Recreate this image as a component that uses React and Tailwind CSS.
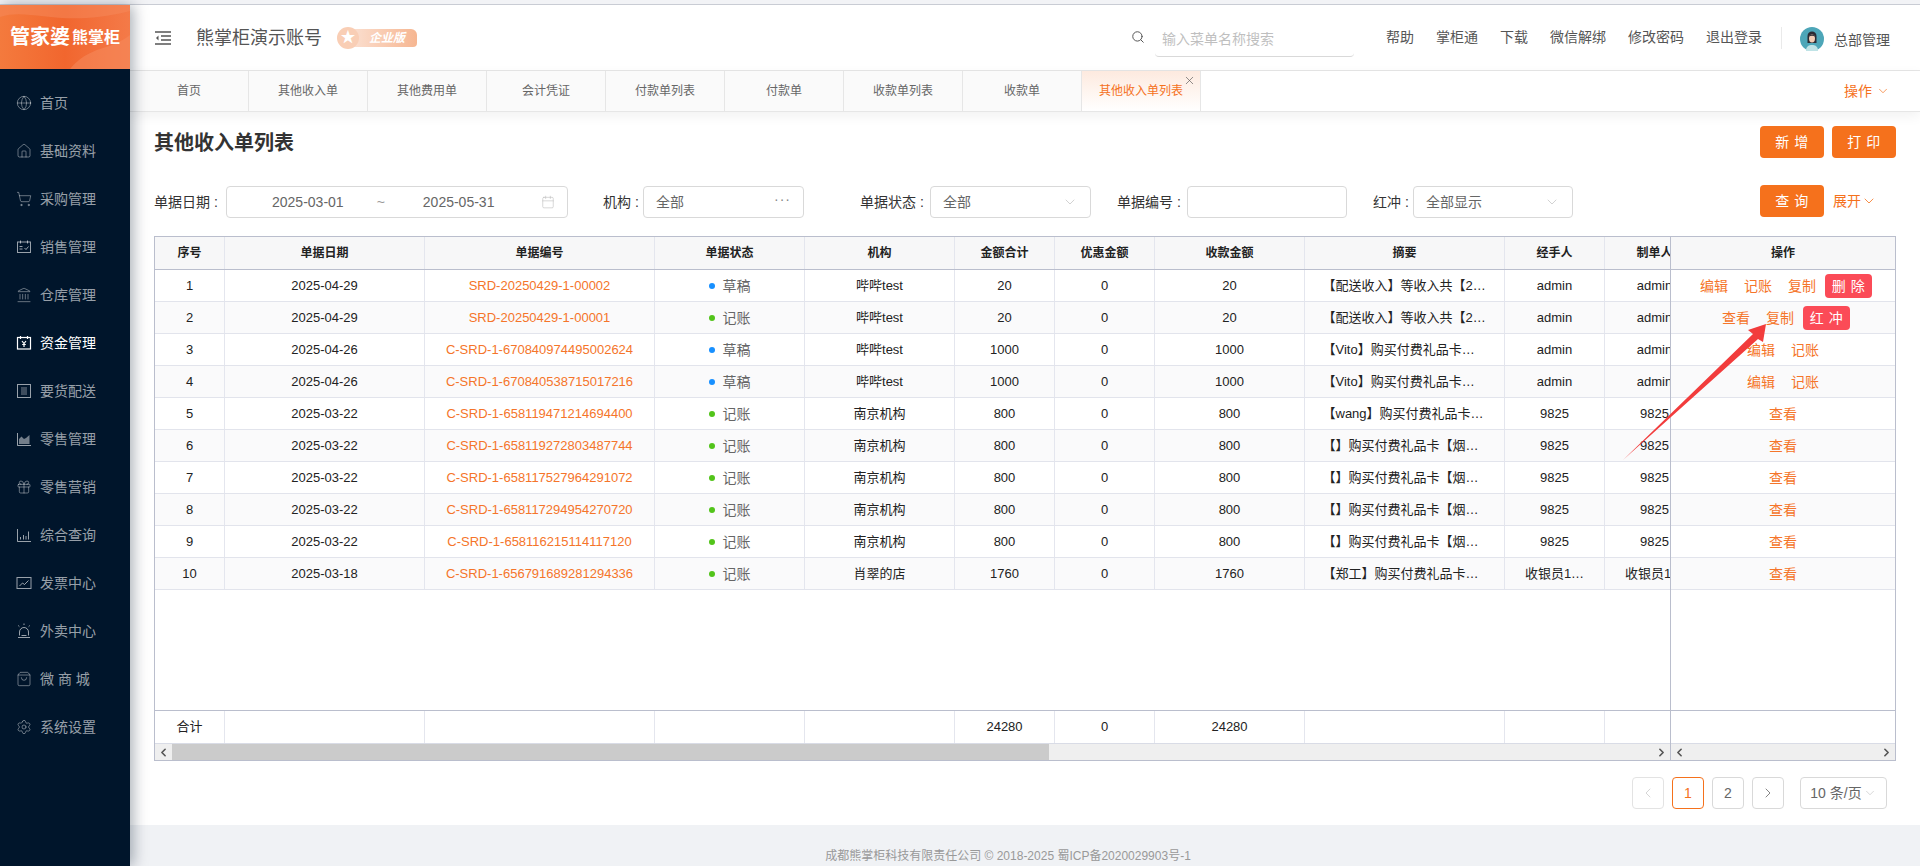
import React from "react";
import {
  Globe,
  House,
  ShoppingCart,
  Landmark,
  Gift,
  ShoppingBag,
  Settings,
  Search,
  Calendar,
  ChevronDown,
  ChevronLeft,
  ChevronRight,
  X,
} from "lucide-react";

const FONT = '"Liberation Sans", "Noto Sans CJK SC", sans-serif';

const SalesIcon = () => (
  <svg width="16" height="16" viewBox="0 0 16 16" fill="none" stroke="currentColor" strokeWidth="1">
    <rect x="1.5" y="3" width="13" height="10.5" />
    <path d="M4.5 1.5v3M11.5 1.5v3M3.5 7.5h3M3.5 10h3M8.5 9l1.5 1.5 2.5-3" />
  </svg>
);
const FundIcon = () => (
  <svg width="16" height="16" viewBox="0 0 16 16" fill="none" stroke="currentColor" strokeWidth="1.2">
    <rect x="1.5" y="2.5" width="13" height="11.5" />
    <path d="M4.5 1v3M11.5 1v3M6 6l2 2.5L10 6M8 8.5V12M6.2 9.5h3.6" />
  </svg>
);
const DeliveryIcon = () => (
  <svg width="16" height="16" viewBox="0 0 16 16" fill="none" stroke="currentColor" strokeWidth="1">
    <rect x="1.5" y="1.5" width="13" height="13" />
    <path d="M5 5h6M5 7h6M5 9h6M5 11h6" opacity="0.8" />
  </svg>
);
const AreaIcon = () => (
  <svg width="16" height="16" viewBox="0 0 16 16" fill="none">
    <path d="M1.5 2v12.5H15" stroke="currentColor" />
    <path d="M3 13V8l2.5-2.5L8 8l2-1 3.5-3V13z" fill="currentColor" opacity="0.75" />
  </svg>
);
const BarsIcon = () => (
  <svg width="16" height="16" viewBox="0 0 16 16" fill="none" stroke="currentColor">
    <path d="M1.5 2v12.5H15M4.5 12.5V10M7.5 12.5V8M10 12.5V9M12.5 12.5V4.5" />
  </svg>
);
const InvoiceIcon = () => (
  <svg width="16" height="16" viewBox="0 0 16 16" fill="none" stroke="currentColor" strokeWidth="1">
    <rect x="1" y="2.5" width="14" height="11" />
    <path d="M3.5 11l3-3 2 1.5 4-4" />
  </svg>
);
const AlarmIcon = () => (
  <svg width="16" height="16" viewBox="0 0 16 16" fill="none" stroke="currentColor" strokeWidth="1">
    <path d="M3.5 12.5V9a4.5 4.5 0 0 1 9 0v3.5M2 14.5h12M8 .5v1.5M2.2 2.5l1.2 1.2M13.8 2.5l-1.2 1.2M5.5 12.5h5" />
  </svg>
);

const MENU = [
  { label: "首页", icon: <Globe size={16} strokeWidth={1} /> },
  { label: "基础资料", icon: <House size={16} strokeWidth={1} /> },
  { label: "采购管理", icon: <ShoppingCart size={16} strokeWidth={1} /> },
  { label: "销售管理", icon: <SalesIcon /> },
  { label: "仓库管理", icon: <Landmark size={16} strokeWidth={1} /> },
  { label: "资金管理", icon: <FundIcon />, active: true },
  { label: "要货配送", icon: <DeliveryIcon /> },
  { label: "零售管理", icon: <AreaIcon /> },
  { label: "零售营销", icon: <Gift size={16} strokeWidth={1} /> },
  { label: "综合查询", icon: <BarsIcon /> },
  { label: "发票中心", icon: <InvoiceIcon /> },
  { label: "外卖中心", icon: <AlarmIcon /> },
  { label: "微 商 城", icon: <ShoppingBag size={16} strokeWidth={1} /> },
  { label: "系统设置", icon: <Settings size={16} strokeWidth={1} /> },
];

const TABS = ["首页", "其他收入单", "其他费用单", "会计凭证", "付款单列表", "付款单", "收款单列表", "收款单", "其他收入单列表"];
const LINKS = ["帮助", "掌柜通", "下载", "微信解绑", "修改密码", "退出登录"];
const COLUMNS = ["序号", "单据日期", "单据编号", "单据状态", "机构", "金额合计", "优惠金额", "收款金额", "摘要", "经手人", "制单人"];
const GRID = "grid grid-cols-[70px_200px_230px_150px_150px_100px_100px_150px_200px_100px_100px] w-[1650px]";

const GIFT = "购买付费礼品卡【烟草】";
const row = (date, code, status, org, amount, memo, handler, maker, actions) => ({ date, code, status, org, amount, memo, handler, maker, actions });
const ROWS = [
  row("2025-04-29", "SRD-20250429-1-00002", "草稿", "哔哔test", 20, "【配送收入】等收入共【2】笔", "admin", "admin", ["编辑", "记账", "复制", "删除"]),
  row("2025-04-29", "SRD-20250429-1-00001", "记账", "哔哔test", 20, "【配送收入】等收入共【2】笔", "admin", "admin", ["查看", "复制", "红冲"]),
  row("2025-04-26", "C-SRD-1-670840974495002624", "草稿", "哔哔test", 1000, "【Vito】购买付费礼品卡【烟草】", "admin", "admin", ["编辑", "记账"]),
  row("2025-04-26", "C-SRD-1-670840538715017216", "草稿", "哔哔test", 1000, "【Vito】购买付费礼品卡【烟草】", "admin", "admin", ["编辑", "记账"]),
  row("2025-03-22", "C-SRD-1-658119471214694400", "记账", "南京机构", 800, "【wang】购买付费礼品卡【烟草】", "9825", "9825", ["查看"]),
  row("2025-03-22", "C-SRD-1-658119272803487744", "记账", "南京机构", 800, "【】" + GIFT, "9825", "9825", ["查看"]),
  row("2025-03-22", "C-SRD-1-658117527964291072", "记账", "南京机构", 800, "【】" + GIFT, "9825", "9825", ["查看"]),
  row("2025-03-22", "C-SRD-1-658117294954270720", "记账", "南京机构", 800, "【】" + GIFT, "9825", "9825", ["查看"]),
  row("2025-03-22", "C-SRD-1-658116215114117120", "记账", "南京机构", 800, "【】" + GIFT, "9825", "9825", ["查看"]),
  row("2025-03-18", "C-SRD-1-656791689281294336", "记账", "肖翠的店", 1760, "【郑工】购买付费礼品卡【烟草】", "收银员1…", "收银员1…", ["查看"]),
];

const Cell = ({ children, className = "" }) => (
  <div className={`flex items-center justify-center border-r border-[#e4e6ee] min-w-0 ${className}`}>{children}</div>
);

const Sidebar = () => (
  <aside className="w-[130px] shrink-0 bg-[#00152b] z-10 shadow-[3px_0_14px_rgba(0,21,41,0.35)] flex flex-col">
    <div className="relative h-[64px] shrink-0 overflow-hidden bg-gradient-to-r from-[#f47a3d] via-[#f1662e] to-[#f47a48] flex items-center pl-[10px] text-white font-bold">
      <svg className="absolute inset-0" width="130" height="64" viewBox="0 0 130 64" fill="none">
        <path d="M0 12C30 2 60 24 130 6V0H0z" fill="#f68a5c" opacity="0.5" />
        <path d="M70 64C90 40 110 46 130 30v34z" fill="#f68a5c" opacity="0.55" />
      </svg>
      <span className="relative text-[20px] leading-none">管家婆</span>
      <span className="relative text-[16px] leading-none ml-[2px] mt-[2px]">熊掌柜</span>
    </div>
    <nav className="pt-[10px]">
      {MENU.map((item) => (
        <div key={item.label} className={`h-12 flex items-center gap-[8px] pl-[16px] text-sm ${item.active ? "text-white" : "text-white/60"}`}>
          {item.icon}
          <span>{item.label}</span>
        </div>
      ))}
    </nav>
  </aside>
);

const Header = () => (
  <header className="h-[66px] shrink-0 bg-white border-b border-[#e6e6e6] flex items-center pl-[25px] pr-[30px]">
    <svg width="16" height="14" viewBox="0 0 16 14" fill="none" stroke="#555" strokeWidth="1.3">
      <path d="M0 1h16M6 5h10M6 9h10M0 13h16" />
      <path d="M3.5 4.5L1 7l2.5 2.5z" fill="#555" stroke="none" />
    </svg>
    <span className="ml-[25px] text-lg text-[#555]">熊掌柜演示账号</span>
    <div className="relative ml-[15px] w-[80px] h-[22px] flex items-center">
      <div className="absolute right-0 left-[8px] h-[18px] rounded-[4px] rounded-tr-[6px] bg-gradient-to-r from-[#fbe3d6] to-[#f6b691] flex items-center pl-[24px] text-white text-xs font-bold italic">
        企业版
      </div>
      <div className="relative w-[22px] h-[22px] rounded-full bg-[#f9ceb5] flex items-center justify-center text-white text-[15px]">★</div>
    </div>
    <div className="ml-auto flex items-center">
      <Search size={14} strokeWidth={1.7} className="text-[#555] -mt-[2px]" />
      <div className="ml-[10px] w-[199px] h-[34px] border-b border-[#d9d9d9] rounded-b-[4px] flex items-center pl-[7px] text-sm text-[#bfbfbf] mt-[4px]">
        输入菜单名称搜索
      </div>
      <div className="ml-[32px] flex items-center gap-[22px] text-sm text-[#555] -mt-[2px]">
        {LINKS.map((l) => (
          <span key={l}>{l}</span>
        ))}
      </div>
      <div className="ml-[19px] w-px h-[22px] bg-[#eaeaea]" />
      <svg className="ml-[18px] mt-[2px]" width="24" height="24" viewBox="0 0 24 24">
        <circle cx="12" cy="12" r="12" fill="#4da6b8" />
        <path d="M6 24c0-5 3-6 6-6s6 1 6 6z" fill="#bfe3e6" />
        <path d="M7.5 16V9c0-3 2-4.5 4.5-4.5S16.500 6 16.500 9v7z" fill="#2b2b33" />
        <ellipse cx="12" cy="11.500" rx="3" ry="4" fill="#f4cdb5" />
        <path d="M8.800 9.500c1-2.500 5.400-2.500 6.400 0-2-1-4.400-1-6.400 0z" fill="#2b2b33" />
      </svg>
      <span className="ml-[10px] text-sm text-[#555] mt-[4px]">总部管理</span>
    </div>
  </header>
);

const Tabs = () => (
  <div className="relative h-[41px] shrink-0 bg-white border-b border-[#e6e6e6] shadow-[0_4px_12px_rgba(0,0,0,0.06)] flex">
    {TABS.map((t, i) => {
      const active = i === TABS.length - 1;
      return (
        <div
          key={t + i}
          className={`relative w-[119px] flex items-center justify-center text-xs border-r border-[#e6e6e6] ${
            active ? "bg-gradient-to-b from-[#fdeadf] to-white text-[#f5711c]" : "bg-[#fafafa] text-[#666]"
          }`}
        >
          {t}
          {active && <X size={13} strokeWidth={1.2} className="absolute top-[3px] right-[4px] text-[#555]" />}
        </div>
      );
    })}
    <div className="ml-auto mr-[30px] flex items-center gap-[4px] text-sm text-[#f5711c]">
      操作
      <ChevronDown size={14} strokeWidth={1.2} />
    </div>
  </div>
);

const Box = ({ className = "", children }) => (
  <div className={`h-8 border border-[#d9d9d9] rounded-[4px] flex items-center text-sm text-[#666] px-[12px] ${className}`}>{children}</div>
);

const OrangeButton = ({ children }) => (
  <button className="w-16 h-8 rounded-[4px] bg-[#f5711c] text-white text-sm tracking-[0.5px]">{children}</button>
);

const Filters = () => (
  <div className="mt-[28px] flex items-center text-sm text-[#333]">
    <span className="w-[72px] whitespace-nowrap">单据日期 :</span>
    <Box className="w-[342px] relative">
      <span className="ml-[33px]">2025-03-01</span>
      <span className="ml-[33px] text-[#999]">~</span>
      <span className="ml-[38px]">2025-05-31</span>
      <Calendar size={14} strokeWidth={1} className="ml-auto text-[#bbb]" />
    </Box>
    <span className="ml-[35px] w-[40px] whitespace-nowrap">机构 :</span>
    <Box className="w-[161px] justify-between">
      全部
      <span className="text-[#888] leading-none tracking-[1px] -mt-[6px]">···</span>
    </Box>
    <span className="ml-[56px] w-[70px] whitespace-nowrap">单据状态 :</span>
    <Box className="w-[161px] justify-between">
      全部
      <ChevronDown size={16} strokeWidth={1} className="text-[#bbb]" />
    </Box>
    <span className="ml-[26px] w-[70px] whitespace-nowrap">单据编号 :</span>
    <Box className="w-[160px]" />
    <span className="ml-[26px] w-[40px] whitespace-nowrap">红冲 :</span>
    <Box className="w-[160px] justify-between">
      全部显示
      <ChevronDown size={16} strokeWidth={1} className="text-[#bbb]" />
    </Box>
    <div className="ml-auto w-[136px] flex items-center -mt-[2px]">
      <OrangeButton>查 询</OrangeButton>
      <span className="ml-[9px] text-[#f5711c] flex items-center">
        展开
        <ChevronDown size={16} strokeWidth={1.2} />
      </span>
    </div>
  </div>
);

const ScrollArrow = ({ dir }) =>
  dir === "left" ? (
    <ChevronLeft size={13} strokeWidth={3} className="text-[#555]" />
  ) : (
    <ChevronRight size={13} strokeWidth={3} className="text-[#555]" />
  );

const Action = ({ label }) =>
  label === "删除" || label === "红冲" ? (
    <span className="ml-[-7px] mr-[-6px] w-[47px] h-[24px] rounded-[4px] bg-[#fb4b57] text-white flex items-center justify-center tracking-[0.5px]">
      {label[0]} {label[1]}
    </span>
  ) : (
    <span className="text-[#f5752a]">{label}</span>
  );

const DataTable = () => (
  <div className="mt-[18px] h-[525px] border border-[#babecd] flex text-[13px] text-[#222]">
    <div className="w-[1515px] shrink-0 flex flex-col overflow-hidden">
      <div className="flex-1 min-h-0 overflow-hidden">
        <div className={`${GRID} h-[33px] bg-[#f7f7f8] border-b border-[#babecd] text-xs font-bold text-[#222]`}>
          {COLUMNS.map((c) => (
            <Cell key={c}>{c}</Cell>
          ))}
        </div>
        {ROWS.map((r, i) => (
          <div key={r.code} className={`${GRID} h-[32px] border-b border-[#e2e4ec] ${i % 2 ? "bg-[#fafafb]" : "bg-white"}`}>
            <Cell>{i + 1}</Cell>
            <Cell>{r.date}</Cell>
            <Cell className="text-[#f5752a]">{r.code}</Cell>
            <Cell className="text-sm text-[#666] gap-[8px]">
              <span className={`w-[6px] h-[6px] rounded-full ${r.status === "草稿" ? "bg-[#1890ff]" : "bg-[#52c41a]"}`} />
              {r.status}
            </Cell>
            <Cell>{r.org}</Cell>
            <Cell>{r.amount}</Cell>
            <Cell>0</Cell>
            <Cell>{r.amount}</Cell>
            <Cell className="px-[17.5px]">
              <span className="block w-full truncate text-center">{r.memo}</span>
            </Cell>
            <Cell>{r.handler}</Cell>
            <Cell className="whitespace-nowrap">{r.maker}</Cell>
          </div>
        ))}
      </div>
      <div className={`${GRID} h-[33px] shrink-0 border-t border-[#babecd] border-b-0`}>
        {COLUMNS.map((c, i) => (
          <Cell key={c}>{i === 0 ? "合计" : i === 5 || i === 7 ? "24280" : i === 6 ? "0" : ""}</Cell>
        ))}
      </div>
      <div className="h-[17px] shrink-0 border-t border-[#d9dce6] bg-[#efefef] flex items-center">
        <div className="w-[17px] h-full flex items-center justify-center">
          <ScrollArrow dir="left" />
        </div>
        <div className="w-[877px] h-full bg-[#cbcbcb]" />
        <div className="ml-auto w-[17px] h-full flex items-center justify-center">
          <ScrollArrow dir="right" />
        </div>
      </div>
    </div>
    <div className="flex-1 min-w-0 flex flex-col border-l border-[#babecd]">
      <div className="h-[33px] shrink-0 flex items-center justify-center bg-[#f7f7f8] border-b border-[#babecd] text-xs font-bold">操作</div>
      {ROWS.map((r, i) => (
        <div key={r.code} className={`h-[32px] shrink-0 flex items-center justify-center gap-[16px] text-sm border-b border-[#e2e4ec] ${i % 2 ? "bg-[#fafafb]" : "bg-white"}`}>
          {r.actions.map((a) => (
            <Action key={a} label={a} />
          ))}
        </div>
      ))}
      <div className="flex-1" />
      <div className="h-[33px] shrink-0 border-t border-[#babecd]" />
      <div className="h-[17px] shrink-0 border-t border-[#d9dce6] bg-[#efefef] flex items-center justify-between px-[2px]">
        <ScrollArrow dir="left" />
        <ScrollArrow dir="right" />
      </div>
    </div>
  </div>
);

const PageBox = ({ children, className = "" }) => (
  <div className={`h-8 w-8 rounded-[4px] border flex items-center justify-center text-sm ${className}`}>{children}</div>
);

const Pagination = () => (
  <div className="mt-[16px] flex items-center justify-end gap-[8px] pr-[9px] text-[#666]">
    <PageBox className="border-[#e3e3e3] text-[#ccc]">
      <ChevronLeft size={16} strokeWidth={1.2} />
    </PageBox>
    <PageBox className="border-[#f5711c] text-[#f5711c]">1</PageBox>
    <PageBox className="border-[#d9d9d9]">2</PageBox>
    <PageBox className="border-[#d9d9d9]">
      <ChevronRight size={16} strokeWidth={1.2} />
    </PageBox>
    <div className="ml-[8px] w-[87px] h-8 rounded-[4px] border border-[#d9d9d9] flex items-center justify-center gap-[1px] text-sm">
      10 条/页
      <ChevronDown size={14} strokeWidth={1} className="text-[#bbb]" />
    </div>
  </div>
);

export default function App() {
  return (
    <div className="relative h-screen overflow-hidden flex flex-col bg-white" style={{ fontFamily: FONT }}>
      <div className="h-[5px] shrink-0 bg-[#f2f3f6] border-b border-[#c9ccd4]" />
      <div className="flex-1 min-h-0 flex">
        <Sidebar />
        <main className="flex-1 min-w-0 flex flex-col">
          <Header />
          <Tabs />
          <div className="flex-1 min-h-0 bg-white px-[24px] pt-[14px]">
            <div className="flex items-center justify-between h-8">
              <h1 className="text-xl font-bold text-[#333] mt-[1px]">其他收入单列表</h1>
              <div className="flex gap-[8px]">
                <OrangeButton>新 增</OrangeButton>
                <OrangeButton>打 印</OrangeButton>
              </div>
            </div>
            <Filters />
            <DataTable />
            <Pagination />
          </div>
          <footer className="h-[41px] shrink-0 bg-[#f0f2f5] flex items-end justify-center pr-[34px] pb-[2px] text-xs text-[#999]">
            成都熊掌柜科技有限责任公司 © 2018-2025 蜀ICP备2020029903号-1
          </footer>
        </main>
      </div>
      <svg className="absolute inset-0 w-full h-full pointer-events-none z-20" viewBox="0 0 1920 866">
        <polygon points="1623,460 1753,334 1748,330 1766,324 1763,342 1758,339" fill="#f23c3c" />
      </svg>
    </div>
  );
}
